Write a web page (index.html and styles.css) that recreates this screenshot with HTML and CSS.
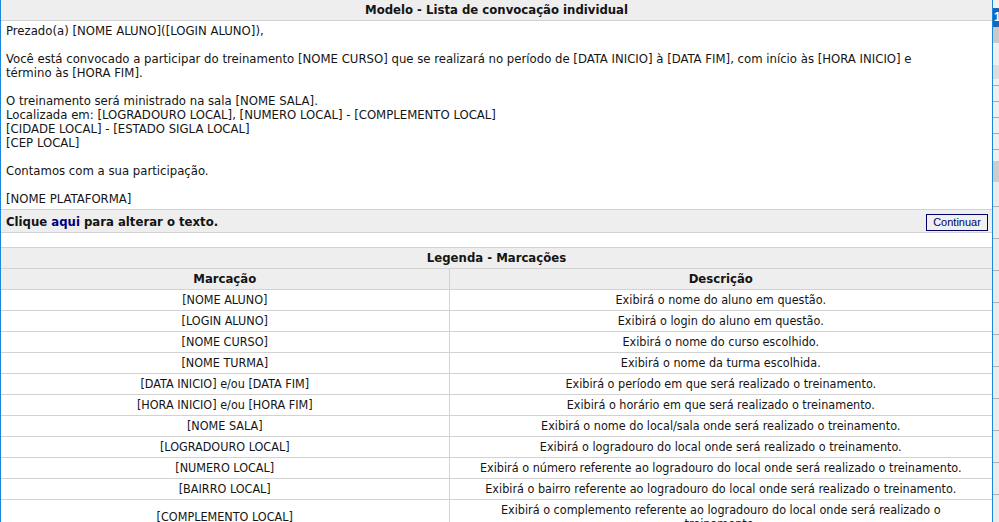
FILE: index.html
```html
<!DOCTYPE html>
<html lang="pt-BR">
<head>
<meta charset="utf-8">
<title>Modelo - Lista de convocação individual</title>
<link rel="stylesheet" href="styles.css">
</head>
<body>
<div class="screen">
  <div class="window">
    <div class="title">Modelo - Lista de convocação individual</div>
    <div class="letter">
      <p>Prezado(a) [NOME ALUNO]([LOGIN ALUNO]),</p>
      <p>Você está convocado a participar do treinamento [NOME CURSO] que se realizará no período de [DATA INICIO] à [DATA FIM], com início às [HORA INICIO] e<br>término às [HORA FIM].</p>
      <p>O treinamento será ministrado na sala [NOME SALA].<br>Localizada em: [LOGRADOURO LOCAL], [NUMERO LOCAL] - [COMPLEMENTO LOCAL]<br>[CIDADE LOCAL] - [ESTADO SIGLA LOCAL]<br>[CEP LOCAL]</p>
      <p>Contamos com a sua participação.</p>
      <p>[NOME PLATAFORMA]</p>
    </div>
    <div class="actions">
      <span class="hint">Clique <a class="link" href="#">aqui</a> para alterar o texto.</span>
      <button class="btn" type="button">Continuar</button>
    </div>
    <div class="spacer"></div>
    <table class="legend">
      <colgroup><col class="col-mark"><col class="col-desc"></colgroup>
      <thead>
        <tr><th class="caption" colspan="2">Legenda - Marcações</th></tr>
        <tr><th>Marcação</th><th>Descrição</th></tr>
      </thead>
      <tbody>
        <tr><td>[NOME ALUNO]</td><td>Exibirá o nome do aluno em questão.</td></tr>
        <tr><td>[LOGIN ALUNO]</td><td>Exibirá o login do aluno em questão.</td></tr>
        <tr><td>[NOME CURSO]</td><td>Exibirá o nome do curso escolhido.</td></tr>
        <tr><td>[NOME TURMA]</td><td>Exibirá o nome da turma escolhida.</td></tr>
        <tr><td>[DATA INICIO] e/ou [DATA FIM]</td><td>Exibirá o período em que será realizado o treinamento.</td></tr>
        <tr><td>[HORA INICIO] e/ou [HORA FIM]</td><td>Exibirá o horário em que será realizado o treinamento.</td></tr>
        <tr><td>[NOME SALA]</td><td>Exibirá o nome do local/sala onde será realizado o treinamento.</td></tr>
        <tr><td>[LOGRADOURO LOCAL]</td><td>Exibirá o logradouro do local onde será realizado o treinamento.</td></tr>
        <tr><td>[NUMERO LOCAL]</td><td>Exibirá o número referente ao logradouro do local onde será realizado o treinamento.</td></tr>
        <tr><td>[BAIRRO LOCAL]</td><td>Exibirá o bairro referente ao logradouro do local onde será realizado o treinamento.</td></tr>
        <tr class="tall"><td>[COMPLEMENTO LOCAL]</td><td>Exibirá o complemento referente ao logradouro do local onde será realizado o<br>treinamento.</td></tr>
      </tbody>
    </table>
  </div>
  <div class="backdrop">
    <div class="bd-top"></div>
    <div class="bd-badge">1</div>
    <div class="bd-tri"></div>
    <div class="bd-light"></div>
    <div class="bd-band"></div>
    <div class="bd-lines"></div>
    <div class="bd-band2"></div>
    <div class="bd-lines2"></div>
  </div>
</div>
</body>
</html>
```
FILE: styles.css
```css
html, body {
  margin: 0;
  padding: 0;
  height: 522px;
  overflow: hidden;
  background: #ffffff;
}

.screen {
  display: flex;
  width: 999px;
  height: 522px;
  overflow: hidden;
}

.window {
  width: 991px;
  flex: none;
  border-left: 1px solid #1a86dc;
  border-right: 1px solid #1a86dc;
  background: #ffffff;
  font-family: "DejaVu Sans Condensed", "Liberation Sans", sans-serif;
  font-stretch: condensed;
  font-size: 12.5px;
  color: #141414;
}

.title {
  height: 20px;
  line-height: 20px;
  background: #eeeeee;
  border-bottom: 1px solid #d2d2d2;
  text-align: center;
  font-weight: bold;
  font-size: 13px;
}

.letter {
  padding: 3px 5px 3px 5px;
  line-height: 14px;
  font-size: 13px;
  border-bottom: 1px solid #d2d2d2;
}

.letter p {
  margin: 0 0 14px 0;
}

.letter p:last-child {
  margin-bottom: 0;
}

.actions {
  height: 22px;
  display: flex;
  align-items: center;
  justify-content: space-between;
  padding: 0 4px 0 5px;
  background: #eeeeee;
  border-bottom: 1px solid #d2d2d2;
}

.hint {
  font-weight: bold;
  font-size: 13px;
}

.link {
  color: #000080;
  text-decoration: none;
}

.btn {
  width: 62px;
  height: 17px;
  padding: 0;
  margin-top: 2px;
  border: 1px solid #000066;
  background: #f0f0f0;
  color: #000066;
  font-family: "Liberation Sans", Arial, sans-serif;
  font-size: 11px;
  line-height: 15px;
}

.spacer {
  height: 14px;
  border-bottom: 1px solid #d2d2d2;
}

.legend {
  width: 100%;
  border-collapse: collapse;
  table-layout: fixed;
}

.legend .col-mark {
  width: 448px;
}

.legend th,
.legend td {
  height: 20px;
  padding: 0 3px;
  text-align: center;
  vertical-align: middle;
  border-bottom: 1px solid #d2d2d2;
  line-height: 14px;
}

.legend th {
  background: #eeeeee;
  font-weight: bold;
  font-size: 13px;
}

.legend th + th,
.legend td + td {
  border-left: 1px solid #d2d2d2;
}

.legend .tall td {
  height: 34px;
}

.backdrop {
  flex: 1;
  display: flex;
  flex-direction: column;
  background: #eeeeee;
  overflow: hidden;
}

.bd-top {
  height: 8px;
  background: #f2f2f2;
}

.bd-badge {
  height: 19px;
  background: #1766b8;
  color: #ffffff;
  font-family: "Liberation Sans", sans-serif;
  font-size: 12px;
  font-weight: bold;
  line-height: 19px;
  padding-left: 1px;
}

.bd-tri {
  height: 16px;
  background: #c9c9c9;
}

.bd-light {
  height: 22px;
  background: #f0f0f0;
}

.bd-band {
  height: 14px;
  background: #dcdcdc;
}

.bd-lines {
  height: 82px;
  background: repeating-linear-gradient(#f0f0f0 0, #f0f0f0 6px, #a8a8a8 6px, #a8a8a8 7px, #f0f0f0 7px, #f0f0f0 16px);
}

.bd-band2 {
  height: 21px;
  background: #cdcdcd;
}

.bd-lines2 {
  flex: 1;
  background: repeating-linear-gradient(#ececec 0, #ececec 24px, #b0b0b0 24px, #b0b0b0 25px, #ececec 25px, #ececec 32px);
}
```
